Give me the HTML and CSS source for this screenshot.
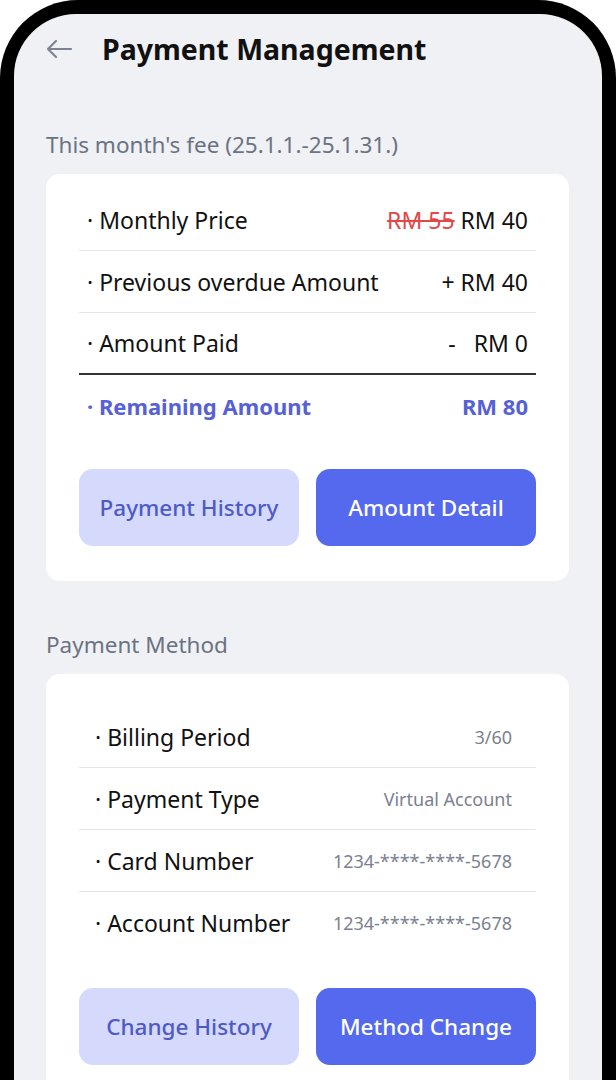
FILE: index.html
```html
<!DOCTYPE html>
<html lang="en">
<head>
  <meta charset="UTF-8">
  <meta name="viewport" content="width=device-width, initial-scale=1.0">
  <title>Payment Management</title>
  <link rel="stylesheet" href="styles.css">
</head>
<body>
  <div class="phone">
    <div class="screen">
      <header>
        <svg class="back" width="28" height="20" viewBox="0 0 28 20" fill="none" stroke="#7c8494" stroke-width="2.2" stroke-linecap="round" stroke-linejoin="round">
          <path d="M26 10H3M11 2L3 10l8 8"/>
        </svg>
        <h1>Payment Management</h1>
      </header>

      <h2 class="label">This month's fee (25.1.1.-25.1.31.)</h2>
      <section class="card">
        <div class="row">
          <span>· Monthly Price</span>
          <span><s class="old">RM 55</s> RM 40</span>
        </div>
        <div class="row">
          <span>· Previous overdue Amount</span>
          <span>+ RM 40</span>
        </div>
        <div class="row total-line">
          <span>· Amount Paid</span>
          <span>-&nbsp;&nbsp;&nbsp;RM 0</span>
        </div>
        <div class="row remain">
          <span>· Remaining Amount</span>
          <span>RM 80</span>
        </div>
        <div class="buttons">
          <button class="light">Payment History</button>
          <button class="dark">Amount Detail</button>
        </div>
      </section>

      <h2 class="label second">Payment Method</h2>
      <section class="card method">
        <div class="row">
          <span>· Billing Period</span>
          <span class="val">3/60</span>
        </div>
        <div class="row">
          <span>· Payment Type</span>
          <span class="val">Virtual Account</span>
        </div>
        <div class="row">
          <span>· Card Number</span>
          <span class="val">1234-****-****-5678</span>
        </div>
        <div class="row last">
          <span>· Account Number</span>
          <span class="val">1234-****-****-5678</span>
        </div>
        <div class="buttons">
          <button class="light">Change History</button>
          <button class="dark">Method Change</button>
        </div>
      </section>
    </div>
  </div>
</body>
</html>
```

FILE: styles.css
```css
/* Base */
body {
  margin: 0;
  background-color: #fff;
  font-family: "Noto Sans", sans-serif;
  color: #111;
  overflow: hidden;
}

/* Phone frame */
.phone {
  background-color: #000;
  border-radius: 78px 78px 0 0;
  padding: 14px 14px 0 14px;
  height: 1066px;
}

.screen {
  background-color: #f0f1f5;
  border-radius: 62px 62px 0 0;
  height: 100%;
  padding: 0 33px 0 32px;
  overflow: hidden;
}

/* Header */
header {
  display: flex;
  align-items: center;
  height: 70px;
}

.back {
  margin-left: -1px;
  margin-right: 29px;
}

header h1 {
  margin: 0;
  font-size: 28.5px;
  font-weight: 700;
  color: #111;
}

/* Section labels */
.label {
  margin: 0;
  height: 90px;
  display: flex;
  align-items: flex-end;
  padding-bottom: 14px;
  box-sizing: border-box;
  font-size: 22.5px;
  font-weight: 400;
  color: #6b7383;
}

.label.second {
  height: 93px;
}

/* Cards */
.card {
  background-color: #fff;
  border-radius: 14px;
  padding: 15px 33px 35px;
}

.row {
  display: flex;
  justify-content: space-between;
  align-items: center;
  height: 61px;
  padding: 0 8px;
  border-bottom: 1px solid #e2e5ee;
  font-size: 23px;
}

.row.total-line {
  border-bottom: 2px solid #333;
  height: 60px;
}

.row.remain {
  border-bottom: none;
  color: #5661d6;
  font-size: 22px;
  font-weight: 700;
}

.old {
  color: #e14848;
}

.buttons {
  display: grid;
  grid-template-columns: 1fr 1fr;
  gap: 17px;
  margin-top: 33px;
}

button {
  height: 77px;
  border: none;
  border-radius: 14px;
  font-family: inherit;
  font-size: 22.5px;
  font-weight: 500;
}

button.light {
  background-color: #d5dafc;
  color: #4d5ac6;
}

button.dark {
  background-color: #5469ee;
  color: #fff;
}

/* Payment method card */
.card.method {
  padding-top: 32px;
}

.method .row {
  padding: 0 24px 0 16px;
}

.method .row.last {
  border-bottom: none;
}

.method .buttons {
  margin-top: 35px;
}

.method .val {
  font-size: 18px;
  color: #7b8190;
}
```
